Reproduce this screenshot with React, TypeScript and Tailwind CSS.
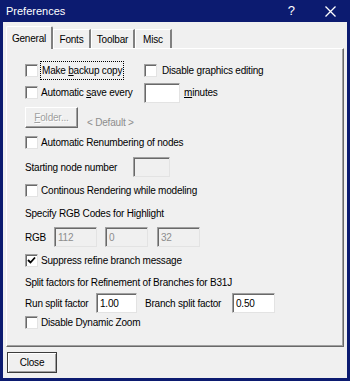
import React from "react";

const font = { fontFamily: '"Liberation Sans", Arial, sans-serif' };

const CheckBox = ({ checked }: { checked?: boolean }) => (
  <div className="w-[13px] h-[13px] shrink-0 bg-white border border-t-[#a0a0a0] border-l-[#a0a0a0] border-r-[#e3e3e3] border-b-[#e3e3e3] shadow-[inset_1px_1px_0_#696969] flex items-center justify-center">
    {checked && (
      <svg width="9" height="9" viewBox="0 0 9 9">
        <path d="M1 4 L3.5 6.5 L8 1.5" stroke="#000" strokeWidth="1.8" fill="none" />
      </svg>
    )}
  </div>
);

const TextBox = ({ w, value, disabled }: { w: string; value?: string; disabled?: boolean }) => (
  <div
    className={`${w} h-[20px] shrink-0 flex items-center pl-[3px] border border-t-[#a0a0a0] border-l-[#a0a0a0] border-r-[#e3e3e3] border-b-[#e3e3e3] shadow-[inset_1px_1px_0_#696969] ${
      disabled ? "bg-[#f0f0f0] text-[#8d8d8d]" : "bg-white text-black"
    }`}
  >
    {value}
  </div>
);

const Tab = ({ label, w, active }: { label: string; w: string; active?: boolean }) => (
  <div
    className={`${w} flex items-center justify-center border-l border-t border-r-2 border-l-white border-t-white border-r-[#808080] ${
      active ? "h-[23px] -mb-[1px] relative z-10 bg-[#f0f0f0] rounded-t-[2px]" : "h-[19px] bg-[#f0f0f0] text-[#000]"
    }`}
  >
    {label}
  </div>
);

export default function App() {
  return (
    <div
      className="w-[350px] h-[381px] bg-[#0c1b70] flex flex-col text-[10px] tracking-[-0.2px] text-black select-none"
      style={font}
    >
      <div className="h-[22px] flex items-center pl-[6px] pr-[14px] text-white text-[11px] tracking-normal">
        <span className="flex-1">Preferences</span>
        <span className="text-[13px] mr-[30px]">?</span>
        <svg width="11" height="11" viewBox="0 0 11 11">
          <path d="M0.5 0.5 L10.5 10.5 M10.5 0.5 L0.5 10.5" stroke="#fff" strokeWidth="1.3" />
        </svg>
      </div>

      <div className="flex-1 mx-[3px] mb-[3px] bg-[#f0f0f0] flex flex-col pt-[3px]">
        <div className="flex items-end pl-[3px] h-[23px]">
          <Tab label="General" w="w-[47px]" active />
          <Tab label="Fonts" w="w-[38px]" />
          <Tab label="Toolbar" w="w-[44px]" />
          <Tab label="Misc" w="w-[37px]" />
        </div>

        <div className="ml-[3px] w-[338px] h-[299px] border border-t-white border-l-white border-r-[#696969] border-b-[#696969] shadow-[inset_-1px_-1px_0_#a0a0a0] flex flex-col pt-[10px] pl-[18px]">
          <div className="h-[22px] flex items-center">
            <div className="w-[119px] flex items-center">
              <CheckBox />
              <span className="ml-[2px] px-[1px] py-[1px] border border-dotted border-black">
                Make <u>b</u>ackup copy
              </span>
            </div>
            <CheckBox />
            <span className="ml-[5px]">
              Disable <u>g</u>raphics editing
            </span>
          </div>

          <div className="h-[23px] flex items-center">
            <div className="w-[119px] flex items-center">
              <CheckBox />
              <span className="ml-[3px]">
                Automatic <u>s</u>ave every
              </span>
            </div>
            <TextBox w="w-[36px]" />
            <span className="ml-[4px]">
              <u>m</u>inutes
            </span>
          </div>

          <div className="h-[26px] flex items-center">
            <div className="w-[53px] h-[21px] flex items-center justify-center border border-t-white border-l-white border-r-[#696969] border-b-[#696969] shadow-[inset_-1px_-1px_0_#a0a0a0] text-[#a0a0a0] [text-shadow:1px_1px_0_#fff]">
              <span>
                <u>F</u>older...
              </span>
            </div>
            <span className="ml-[9px] mt-[11px] text-[#8d8d8d]">&lt; Default &gt;</span>
          </div>

          <div className="h-[25px] flex items-center">
            <CheckBox />
            <span className="ml-[3px]">Automatic Renumbering of nodes</span>
          </div>

          <div className="h-[24px] flex items-center">
            <span className="w-[108px]">Starting node number</span>
            <TextBox w="w-[37px]" disabled />
          </div>

          <div className="h-[23px] flex items-center">
            <CheckBox />
            <span className="ml-[3px]">Continous Rendering while modeling</span>
          </div>

          <div className="h-[23px] flex items-center">
            <span>Specify RGB Codes for Highlight</span>
          </div>

          <div className="h-[24px] flex items-center">
            <span className="w-[29px]">RGB</span>
            <TextBox w="w-[43px]" value="112" disabled />
            <div className="w-[8px]" />
            <TextBox w="w-[43px]" value="0" disabled />
            <div className="w-[9px]" />
            <TextBox w="w-[43px]" value="32" disabled />
          </div>

          <div className="h-[22px] flex items-center">
            <CheckBox checked />
            <span className="ml-[3px]">Suppress refine branch message</span>
          </div>

          <div className="h-[22px] flex items-center">
            <span>Split factors for Refinement of Branches for B31J</span>
          </div>

          <div className="h-[20px] flex items-center">
            <span className="w-[71px]">Run split factor</span>
            <TextBox w="w-[41px]" value="1.00" />
            <span className="ml-[8px] w-[87px]">Branch split factor</span>
            <TextBox w="w-[43px]" value="0.50" />
          </div>

          <div className="h-[18px] flex items-center">
            <CheckBox />
            <span className="ml-[3px]">Disable Dynamic Zoom</span>
          </div>
        </div>

        <div className="flex-1 flex items-center pl-[4px]">
          <div className="w-[50px] h-[21px] flex items-center justify-center border border-[#3c3c3c] shadow-[inset_1px_1px_0_#fff,inset_-1px_-1px_0_#a0a0a0]">
            Close
          </div>
        </div>
      </div>
    </div>
  );
}
